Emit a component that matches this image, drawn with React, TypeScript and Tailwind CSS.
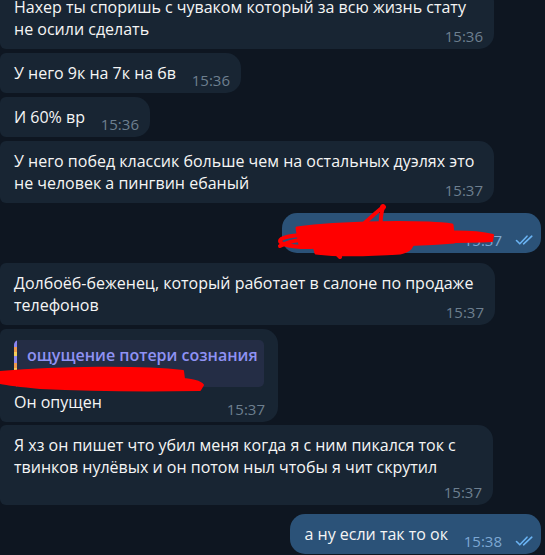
import React from "react";

function Time({ t, className = "" }: { t: string; className?: string }) {
  return (
    <span className={"text-[15px] leading-[16px] text-[#6d7f8f] " + className}>{t}</span>
  );
}

function Checks() {
  return (
    <svg width="20" height="12" viewBox="0 0 20 12" fill="none" stroke="#6ab3f3" strokeWidth="1.6" strokeLinecap="round" strokeLinejoin="round">
      <path d="M1.5 6.5 L4.8 9.8 L12 2.2" />
      <path d="M8.6 9.8 L16.8 2.2" />
    </svg>
  );
}

function In({
  children,
  time,
  className = "",
}: {
  children: React.ReactNode;
  time: string;
  className?: string;
}) {
  return (
    <div
      className={
        "relative rounded-l-[6px] rounded-r-[15px] bg-[#182533] py-[9px] pl-[14px] pr-[11px] leading-[22px] " +
        className
      }
    >
      {children}
      <span className="inline-block w-[54px]" />
      <Time t={time} className="absolute bottom-[5px] right-[11px]" />
    </div>
  );
}

function Out({
  children,
  time,
  className = "",
}: {
  children: React.ReactNode;
  time: string;
  className?: string;
}) {
  return (
    <div
      className={
        "relative ml-auto mr-[4px] w-fit rounded-[15px] bg-[#2b5278] py-[9px] pl-[14px] pr-[13px] leading-[22px] " +
        className
      }
    >
      {children}
      <span className="inline-block w-[80px]" />
      <span className="absolute bottom-[5px] right-[6px] flex items-center gap-[13px]">
        <span className="text-[15px] leading-[16px] text-[#7da8d3]">{time}</span>
        <Checks />
      </span>
    </div>
  );
}

export default function App() {
  return (
    <div className="relative h-[555px] w-[545px] overflow-hidden bg-[#0e1621] font-['Open_Sans',sans-serif] text-[16px] text-[#f5f5f5]">
      <div className="mt-[-13px] flex flex-col">
        <In time="15:36" className="w-[494px]">
          Нахер ты споришь с чуваком который за всю жизнь стату
          <br />
          не осили сделать
        </In>
        <In time="15:36" className="mt-[4px] w-fit">
          У него 9к на 7к на бв
        </In>
        <In time="15:36" className="mt-[4px] w-fit">
          И 60% вр
        </In>
        <In time="15:37" className="mt-[4px] w-[494px]">
          У него побед классик больше чем на остальных дуэлях это
          <br />
          не человек а пингвин ебаный
        </In>

        <Out time="15:37" className="mt-[10px]">
          <span className="inline-block h-[1px] w-[152px] align-middle" />
        </Out>

        <In time="15:37" className="mt-[10px] w-[495px]">
          Долбоёб-беженец, который работает в салоне по продаже
          <br />
          телефонов
        </In>

        <div className="relative mt-[4px] w-[278px] rounded-l-[6px] rounded-r-[15px] bg-[#182533] pb-[9px] pl-[14px] pr-[14px] pt-[11px] leading-[22px]">
          <div className="flex h-[47px] overflow-hidden rounded-[5px] bg-[#242d45]">
            <div className="w-[3px] shrink-0 bg-[repeating-linear-gradient(180deg,#8b86f0_0px,#8b86f0_7px,#f09a4c_7px,#f09a4c_12px,#f3cf5a_12px,#f3cf5a_16px)]" />
            <div className="pl-[10px] pt-[4px]">
              <div className="font-semibold text-[#8f92f4]">ощущение потери сознания</div>
            </div>
          </div>
          <div className="mt-[4px]">
            Он опущен
          </div>
          <Time t="15:37" className="absolute bottom-[5px] right-[13px]" />
        </div>

        <div className="mt-[3px] w-[493px] rounded-l-[6px] rounded-r-[15px] bg-[#182533] pb-[5px] pl-[14px] pr-[11px] pt-[9px] leading-[22px]">
          <div>
            Я хз он пишет что убил меня когда я с ним пикался ток с
            <br />
            твинков нулёвых и он потом ныл чтобы я чит скрутил
          </div>
          <div className="mt-[6px] flex justify-end">
            <Time t="15:37" />
          </div>
        </div>

        <Out time="15:38" className="mt-[9px]">
          а ну если так то ок
        </Out>
      </div>

      <svg
        className="pointer-events-none absolute left-0 top-0"
        width="545"
        height="555"
        viewBox="0 0 545 555"
        fill="none"
        stroke="#ff0000"
        strokeLinecap="round"
        strokeLinejoin="round"
      >
        {/* scribble over outgoing message */}
        <path d="M297 228 C340 222 420 221 452 225 L454 242 C420 245 360 246 300 245 Z" fill="#ff0000" strokeWidth="3" />
        <path d="M440 232 C460 231 480 232 493 235 L492 241 C475 242 455 242 440 242 Z" fill="#ff0000" strokeWidth="2" />
        <path d="M313 242 L412 240 C414 246 410 251 400 253 C370 255 340 256 316 253 Z" fill="#ff0000" strokeWidth="3" />
        <ellipse cx="306" cy="241" rx="26" ry="6" strokeWidth="4" />
        <path d="M280 246 C286 243 292 241 300 240" strokeWidth="4" />
        <path d="M335 252 L340 257" strokeWidth="4" />
        <path d="M357 230 C366 222 374 214 383 207" strokeWidth="4" />
        <path d="M383 207 C381 214 380 221 381 229" strokeWidth="4" />
        <circle cx="383" cy="207" r="2.5" fill="#ff0000" />
        {/* scribble over reply preview */}
        <path
          d="M0 372 C60 367 140 366 183 371 L184 379 C192 380 200 381 203 385 L200 390 C140 391 80 390 40 388 C20 386 5 384 0 383 Z"
          fill="#ff0000"
          strokeWidth="2"
        />
      </svg>
    </div>
  );
}
